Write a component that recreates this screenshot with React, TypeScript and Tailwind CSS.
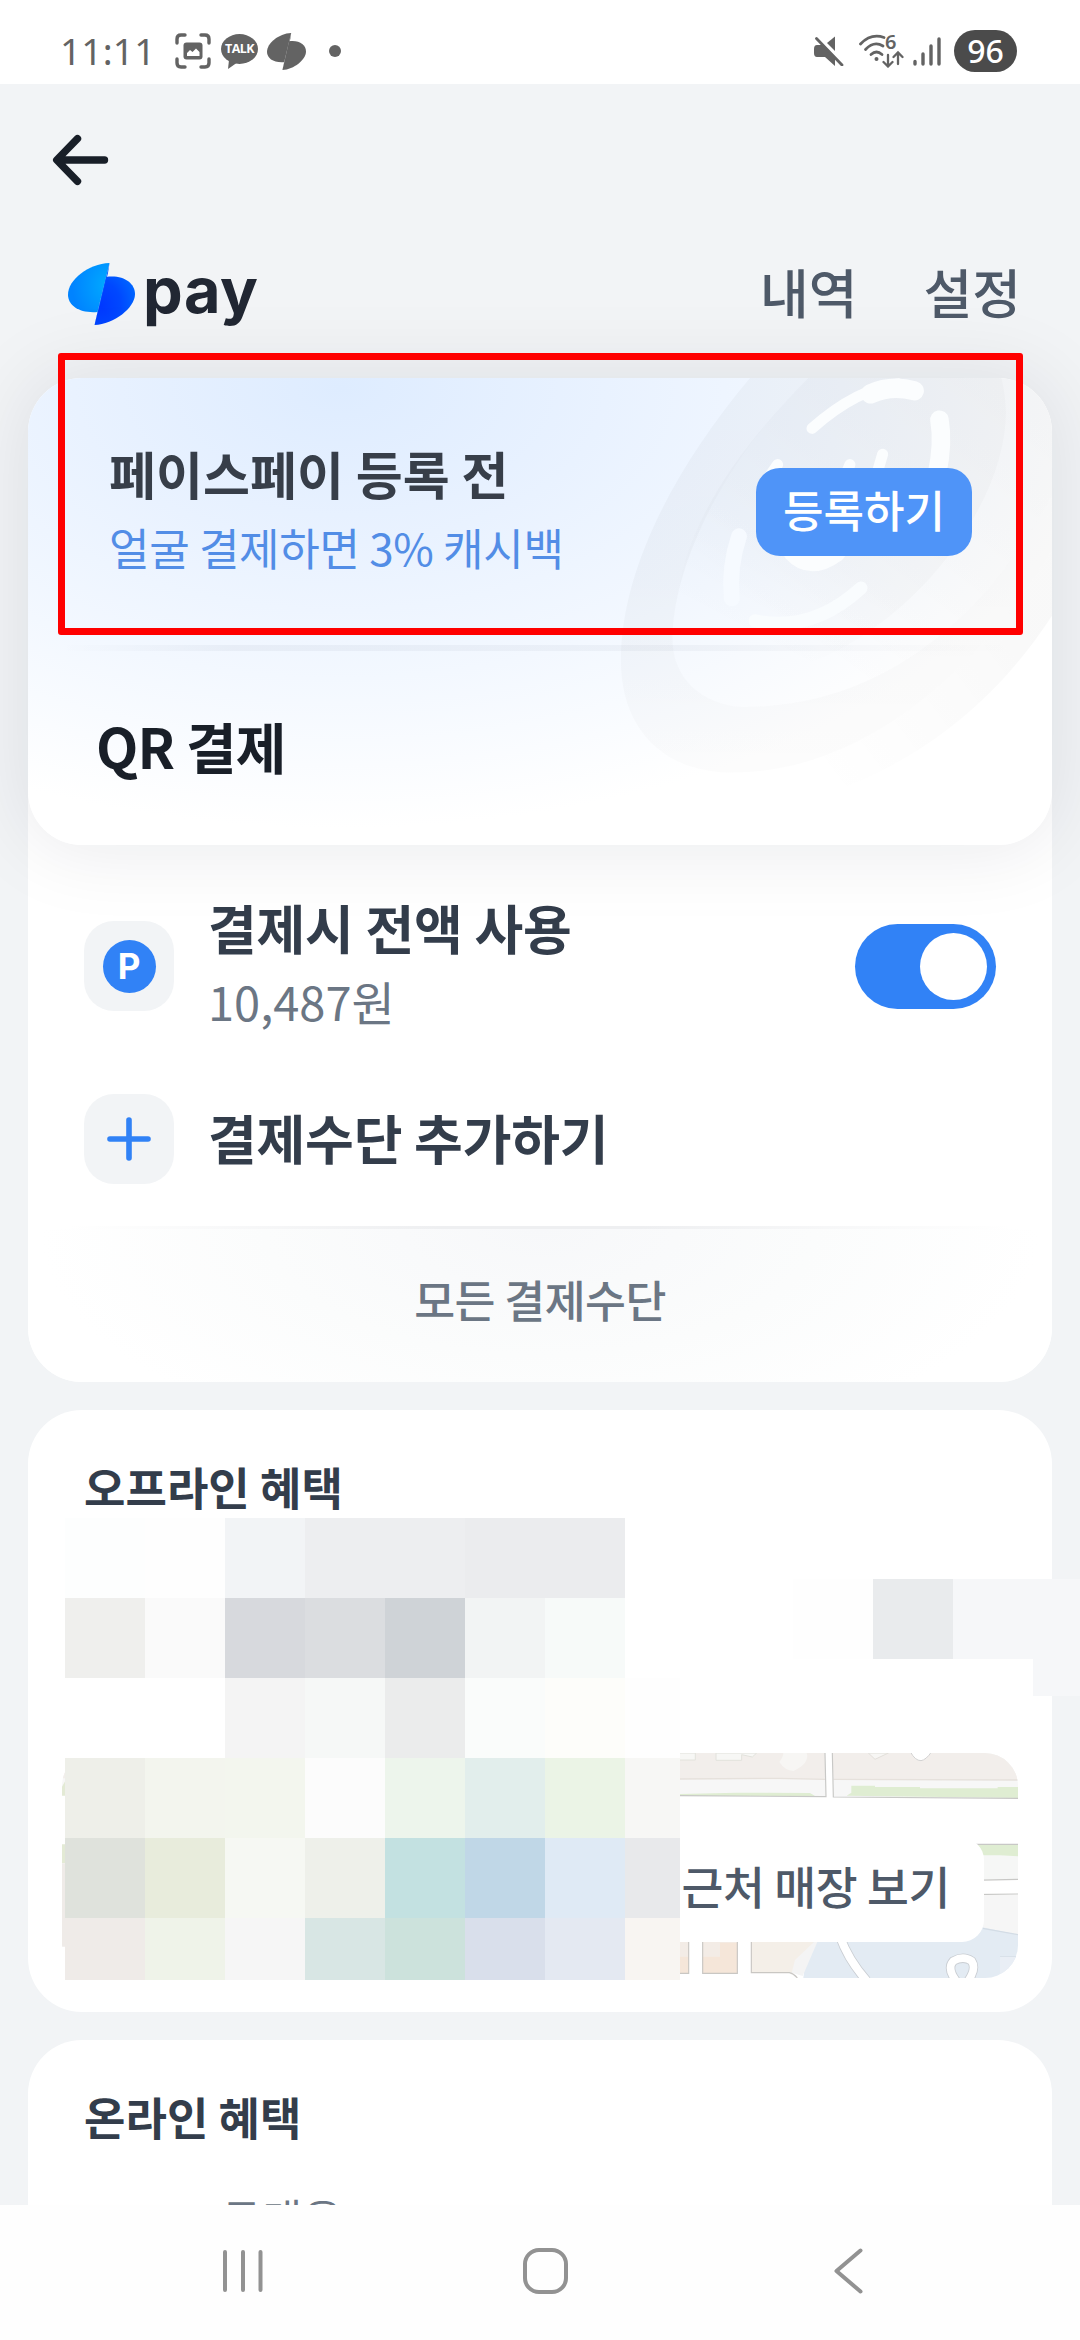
import type { ReactNode } from 'react';

const mosaicRows = [
  ['#fdfefe', '#fefefe', '#f2f4f6', '#edeef0', '#edeef0', '#ebecee', '#ebecee'],
  ['#efefed', '#fafafa', '#d7d9dd', '#dbdde0', '#cfd3d7', '#f2f4f4', '#f7faf9'],
  ['#ffffff', '#ffffff', '#f4f4f4', '#f6f8f7', '#ebecec', '#fafcfb', '#fdfdfa', '#fefefe'],
  ['#eeefe9', '#f3f5ee', '#f3f6ee', '#fcfcfc', '#edf5ec', '#e2eeec', '#ebf4e6', '#f7f7f5'],
  ['#dfe2dc', '#e8ecdc', '#f6f8f3', '#eef0ea', '#c3e1e1', '#c0d7e7', '#dfeaf5', '#e8e9eb'],
  ['#efebe8', '#eff3e9', '#f6f6f6', '#d8e6e4', '#cce2dc', '#d9dfeb', '#e4e9f2', '#f8f5f2'],
];

function TossMark({ className, mono = false }: { className: string; mono?: boolean }) {
  return (
    <svg className={className} viewBox="0 0 67 62" preserveAspectRatio="none">
      <defs>
        <radialGradient id="markLeft" cx="0.95" cy="0.45" r="0.85">
          <stop offset="0" stopColor="#00aaff" />
          <stop offset="1" stopColor="#0083ff" />
        </radialGradient>
        <radialGradient id="markRight" cx="0.15" cy="0.6" r="0.9">
          <stop offset="0" stopColor="#0038ff" />
          <stop offset="0.55" stopColor="#0048ff" />
          <stop offset="1" stopColor="#0066ff" />
        </radialGradient>
      </defs>
      <path
        d="M38 14 C55 11.5 67 20 67 31 C67 45 46 61 26.500 62 Z"
        fill={mono ? '#636363' : 'url(#markRight)'}
      />
      <path
        d="M41.500 0 C20 1 0 17 0 31.500 C0 43 12 50.500 29.500 49 Z"
        fill={mono ? '#636363' : 'url(#markLeft)'}
      />
      <path d="M41.500 0 L26.500 62 L31 45 L40 10 Z" fill={mono ? '#636363' : '#0058ff'} />
    </svg>
  );
}

function StatusBar() {
  return (
    <div className="flex h-[84px] shrink-0 items-center bg-white pl-[60px] pr-[63px] pt-[18px]">
      <span className="w-[115px] font-['Noto_Sans'] text-[37px] leading-[60px] font-normal tracking-[0.200px] text-[#636363]">
        11:11
      </span>
      <svg className="h-[36px] w-[36px]" viewBox="0 0 36 36" fill="none">
        <path
          d="M2 10 V6 Q2 2 6 2 H10 M26 2 H30 Q34 2 34 6 V10 M34 26 V30 Q34 34 30 34 H26 M10 34 H6 Q2 34 2 30 V26"
          stroke="#636363"
          strokeWidth="3.400"
          strokeLinecap="round"
        />
        <rect x="8.500" y="9.500" width="19" height="17" rx="3" fill="#636363" />
        <path d="M12 23 V20 L15 17 L17.500 19 L21 15.500 L24.500 19 V23 Z" fill="#fff" />
      </svg>
      <div className="relative ml-[10px] h-[36px] w-[37px]">
        <svg className="h-full w-full" viewBox="0 0 37 36">
          <ellipse cx="18.500" cy="16" rx="18.500" ry="15" fill="#636363" />
          <path d="M8 27 L7 36 L17 29 Z" fill="#636363" />
        </svg>
        <span className="absolute inset-x-0 top-[9px] text-center font-['Open_Sans'] text-[12.500px] leading-[14px] font-bold tracking-[-0.600px] text-white">
          TALK
        </span>
      </div>
      <TossMark mono className="ml-[9px] h-[37px] w-[39px]" />
      <div className="ml-[23px] h-[12px] w-[12px] rounded-full bg-[#636363]" />
      <svg className="ml-auto h-[30px] w-[30px]" viewBox="0 0 30 30">
        <path d="M0 13 Q0 9 3 9 H8 L21 22 V30 L11 21 H3 Q0 21 0 17 Z" fill="#636363" />
        <path d="M13 7 L21 0.500 V15 Z" fill="#636363" />
        <path d="M2.500 2.500 L28 29" stroke="#636363" strokeWidth="2.800" strokeLinecap="round" />
      </svg>
      <div className="relative ml-[15px] h-[34px] w-[45px]">
        <svg className="h-full w-full" viewBox="0 0 45 34" fill="none" stroke="#636363" strokeLinecap="round">
          <path d="M1.500 10 Q12 -1 25 3.500" strokeWidth="2.800" />
          <path d="M6.500 15.500 Q15 6.500 24 12" strokeWidth="2.800" />
          <path d="M12 20.500 Q17.500 15.500 23 20.500" strokeWidth="2.800" />
          <circle cx="17.500" cy="25" r="2" fill="#636363" stroke="none" />
          <path d="M29 21 V32 M24.500 28 L29 32.500 L33.500 28" strokeWidth="2.300" />
          <path d="M39 30 V19 M34.500 23 L39 18.500 L43.500 23" strokeWidth="2.300" />
        </svg>
        <span className="absolute left-[26px] top-[-2px] font-['Noto_Sans'] text-[20px] leading-[20px] font-semibold text-[#636363]">
          6
        </span>
      </div>
      <svg className="ml-[9px] h-[30px] w-[28px]" viewBox="0 0 28 30" stroke="#636363" strokeWidth="3.400" strokeLinecap="round">
        <path d="M2 25.500 V28 M10 18 V28 M18 10 V28 M26 3 V28" />
      </svg>
      <div className="ml-[13px] flex h-[42px] w-[63px] items-center justify-center rounded-full bg-[#4b4b4b] font-['Noto_Sans'] text-[32px] leading-[42px] font-medium text-white">
        96
      </div>
    </div>
  );
}

// Faint face coin in the top right corner of the pay card
function FaceCoin() {
  return (
    <svg className="absolute inset-0 h-full w-full" viewBox="-1487 141 2974 1354" preserveAspectRatio="none">
      <defs>
        <linearGradient id="coinRim" gradientUnits="userSpaceOnUse" x1="0" y1="141" x2="0" y2="1290">
          <stop offset="0" stopColor="#000" stopOpacity="0.026" />
          <stop offset="0.500" stopColor="#000" stopOpacity="0.028" />
          <stop offset="1" stopColor="#000" stopOpacity="0.012" />
        </linearGradient>
        <linearGradient id="coinTail" gradientUnits="userSpaceOnUse" x1="800" y1="1300" x2="1400" y2="850">
          <stop offset="0" stopColor="#000" stopOpacity="0" />
          <stop offset="1" stopColor="#000" stopOpacity="0.026" />
        </linearGradient>
        <linearGradient id="coinInner" gradientUnits="userSpaceOnUse" x1="1400" y1="200" x2="850" y2="960">
          <stop offset="0" stopColor="#000" stopOpacity="0.036" />
          <stop offset="0.500" stopColor="#000" stopOpacity="0.024" />
          <stop offset="1" stopColor="#000" stopOpacity="0.005" />
        </linearGradient>
        <linearGradient id="coinFace" gradientUnits="userSpaceOnUse" x1="1100" y1="200" x2="700" y2="960">
          <stop offset="0" stopColor="#000" stopOpacity="0.018" />
          <stop offset="0.600" stopColor="#000" stopOpacity="0.018" />
          <stop offset="1" stopColor="#000" stopOpacity="0" />
        </linearGradient>
      </defs>
      <path
        d="M610 141 C400 390 235 690 235 960 C235 1150 350 1285 560 1285 C900 1285 1240 1040 1487 640 V480 C1300 830 1000 1095 590 1095 C470 1090 385 1010 385 900 C385 680 540 370 780 141 Z"
        fill="url(#coinRim)"
      />
      <path d="M560 1285 C900 1285 1240 1040 1487 640 V830 C1310 1100 1080 1270 780 1365 Z" fill="url(#coinTail)" />
      <path
        d="M780 141 C540 370 385 680 385 900 C385 1010 470 1090 590 1095 C1000 1095 1300 830 1487 480 V141 Z"
        fill="url(#coinInner)"
      />
      <path
        d="M780 141 C560 360 400 600 395 830 C470 950 640 1000 800 960 C1100 840 1353 500 1353 240 Q1352 190 1340 141 Z"
        fill="url(#coinFace)"
      />
      <g fill="none" stroke="#fbfdfe" strokeLinecap="round">
        <path d="M790 287 Q920 172 1040 158" strokeWidth="32" />
        <path d="M960 187 Q1020 160 1087 178" strokeWidth="56" />
        <path d="M1160 262 Q1172 330 1153 420" strokeWidth="54" />
        <path d="M690 392 L650 450 M900 392 L880 440 M995 362 L978 420" strokeWidth="32" />
        <path d="M735 645 Q785 700 860 645" strokeWidth="58" />
        <path d="M578 600 Q548 690 557 780" strokeWidth="46" stroke="#f6faff" />
        <path d="M625 845 Q790 880 932 750" strokeWidth="38" stroke="#f9fcfe" />
      </g>
    </svg>
  );
}

function PayCard() {
  return (
    <section className="relative z-10 mx-7 h-[467px] shrink-0 rounded-[54px] bg-white shadow-[0_0_80px_6px_rgba(0,20,45,0.085)]">
      <div className="absolute inset-0 overflow-hidden rounded-[54px] bg-[radial-gradient(ellipse_760px_440px_at_312px_10px,#deecff_0%,#e9f2ff_35%,#f3f8ff_66%,#ffffff_100%)]">
        <FaceCoin />
      </div>
      <div className="relative flex h-[267px] items-center justify-between pl-[81px] pr-[80px]">
        <div className="-mt-1 flex flex-col">
          <span className="text-[51px] leading-[74px] font-semibold tracking-[0.100px] text-[#373e49]">페이스페이 등록 전</span>
          <span className="text-[44px] leading-[74px] font-normal tracking-[-0.300px] text-[#528de6]">얼굴 결제하면 3% 캐시백</span>
        </div>
        <button className="flex h-[88px] w-[216px] items-center justify-center rounded-[24px] bg-[#4f94f8] pb-[6px] text-[44px] font-medium text-white">
          등록하기
        </button>
      </div>
      <div className="relative h-[6px] bg-[linear-gradient(90deg,transparent_3%,rgba(0,20,60,0.045)_20%,rgba(0,20,60,0.035)_65%,transparent_97%)]" />
      <div className="relative flex h-[194px] items-center pb-[6px] pl-[68px]">
        <span className="text-[55px] font-semibold tracking-[-0.800px] text-[#191f28]">QR 결제</span>
      </div>
    </section>
  );
}

function MethodRow({ icon, title, sub, children }: { icon: ReactNode; title: string; sub?: string; children?: ReactNode }) {
  return (
    <div className="flex h-[172.500px] items-center pl-[56px] pr-[56px]">
      <div className="flex h-[90px] w-[90px] items-center justify-center rounded-[30px] bg-[#f2f4f6]">{icon}</div>
      <div className="-mt-1 ml-[34px] flex flex-1 flex-col">
        <span className="text-[53px] leading-[74px] font-semibold tracking-[-0.200px] text-[#333d4b]">{title}</span>
        {sub && <span className="text-[47px] leading-[74px] tracking-[0px] text-[#6b7684]">{sub}</span>}
      </div>
      {children}
    </div>
  );
}

function PaymentMethods() {
  return (
    <section className="mx-7 -mt-[100px] flex h-[637px] shrink-0 flex-col overflow-hidden rounded-b-[54px] bg-white pt-[135px]">
      <MethodRow
        icon={
          <div className="flex h-[53px] w-[53px] items-center justify-center rounded-full bg-[#3182f6] font-['Inter'] text-[35px] leading-[53px] font-bold text-white">
            P
          </div>
        }
        title="결제시 전액 사용"
        sub="10,487원"
      >
        <div className="flex h-[85px] w-[141px] items-center justify-end rounded-full bg-[#3182f6] pr-[9px]">
          <div className="h-[67px] w-[67px] rounded-full bg-white" />
        </div>
      </MethodRow>
      <MethodRow
        icon={
          <svg className="h-[44px] w-[44px]" viewBox="0 0 44 44" stroke="#3182f6" strokeWidth="5.600" strokeLinecap="round">
            <path d="M22 3 V41 M3 22 H41" />
          </svg>
        }
        title="결제수단 추가하기"
      />
      <div className="mt-px h-[3px] shrink-0 bg-[linear-gradient(90deg,transparent_4%,#eeeff1_40%,#eeeff1_60%,transparent_96%)]" />
      <div className="flex flex-1 items-center justify-center bg-[radial-gradient(ellipse_500px_230px_at_50%_0%,#f7f8fa_0%,#fbfcfc_55%,#ffffff_100%)] pb-[12px] text-[44.500px] font-medium tracking-[-0.600px] text-[#6b7684]">
        모든 결제수단
      </div>
    </section>
  );
}

function StoreMap() {
  return (
    <div className="relative mx-[34px] mt-[226px] h-[225px] overflow-hidden rounded-[33px] bg-white">
      <svg className="h-full w-full" viewBox="-1674 579 2868 675" preserveAspectRatio="none">
        <path d="M-1674 579 H615 L618 710 L-1674 690 Z" fill="#f7f7f7" />
        <path d="M-1674 579 H615 V658 H480 L-1674 655 Z" fill="#f2eeeb" />
        <path d="M637 579 H1194 V715 L640 711 Z" fill="#f7f7f7" />
        <path d="M637 579 H1194 V660 L640 657 Z" fill="#f2eeeb" />
        <path d="M180 657 L480 655 L615 658 M640 658 L1194 660" stroke="#e6e1dc" strokeWidth="4" fill="none" />
        <path d="M180 579 H226 V600 H180 M288 579 V601 H365 V584 L397 591 L410 579 Z" fill="#f7f7f5" stroke="#e2e2dc" strokeWidth="3" />
        <path d="M478 606 Q490 590 490 579 H560 Q570 610 520 633 Q495 632 478 606 Z" fill="#f7f6f4" />
        <path d="M745 579 L765 598 L805 579 Z" fill="#f7f6f4" stroke="#e2dfda" strokeWidth="3" />
        <path d="M871 575 Q885 602 903 602 Q918 600 935 575 Z" fill="#fff" stroke="#d2d2d2" strokeWidth="3" />
        <path d="M180 702 L350 698 L570 699 L585 708 L180 708 Z" fill="#dfedd2" />
        <path d="M680 707 L694 698 V677 H765 V681 L900 681 V685 H1133 V681 H1194 V714 Z" fill="#dfedd2" />
        <path d="M180 707 L618 710 L615 579 M637 579 L640 711 L1194 715" stroke="#c8c8c6" strokeWidth="3.500" fill="none" />
        <path d="M-1674 680 L-1640 620 V707 H-1674 Z M-1674 853 H-1600 V910 H-1674 Z" fill="#e3ead5" />
        <path d="M-1674 910 H-1600 V1160 H-1674 Z" fill="#efebe8" />
        <path d="M1050 853 H1194 V960 H1050 Z" fill="#f6f7f6" />
        <path d="M1070 853 H1194 V889 L1140 886 H1070 Z" fill="#dfedd2" />
        <path d="M1050 853 H1194 M1050 961 L1194 958 M1050 1004 L1194 1002" stroke="#c8c8c6" strokeWidth="3.500" />
        <path d="M1050 1005 H1194 V1125 L1050 1105 Z" fill="#f6f6f6" />
        <path d="M570 1100 H1080 L1194 1124 V1254 H550 Z" fill="#e3ebf3" />
        <path d="M1088 1105 L1194 1124 M1140 1190 H1194" stroke="#d3dce5" strokeWidth="4" />
        <path d="M1140 1190 H1194 V1254 H1140 Z" fill="#e9eef5" />
        <path d="M394 1130 H590 L530 1240 L510 1236 L394 1238 Z" fill="#f4efe8" />
        <path d="M582 1146 L525 1200 L515 1238 L548 1248 L592 1146 Z" fill="#f4f4f4" />
        <path d="M180 1130 H206 V1240 H180 Z M248 1130 H352 V1240 H248 Z" fill="#f3ece6" />
        <path d="M180 1190 H206 V1240 H180 Z M248 1190 H300 V1148 H352 V1240 H248 Z" fill="#f5e6d9" />
        <path d="M180 1240 H206 V1130 M248 1130 V1240 H352 V1130 M394 1130 V1238 H508 Q520 1240 532 1254" stroke="#c9c7c3" strokeWidth="3.500" fill="none" />
        <path d="M660 1130 Q685 1200 740 1262" stroke="#c9cdd2" strokeWidth="29" fill="none" />
        <path d="M660 1130 Q685 1200 740 1262" stroke="#fff" strokeWidth="24" fill="none" />
        <path d="M1008 1262 Q980 1225 1000 1203 Q1030 1186 1055 1203 Q1070 1225 1045 1262" stroke="#c9cdd2" strokeWidth="28" fill="none" />
        <path d="M1008 1262 Q980 1225 1000 1203 Q1030 1186 1055 1203 Q1070 1225 1045 1262" stroke="#fff" strokeWidth="23" fill="none" />
      </svg>
      <button className="absolute bottom-[36px] right-[34px] flex h-[104px] w-[880px] items-center justify-end rounded-[22px] bg-white pb-[11px] pr-[34px] text-[45.500px] leading-[60px] font-medium tracking-[-0.400px] text-[#4e5968]">
        근처 매장 보기
      </button>
    </div>
  );
}

function Mosaic() {
  return (
    <>
      <div className="absolute left-[65px] top-[1434px] flex h-[462px] flex-col overflow-hidden">
        {mosaicRows.map((row, y) => (
          <div key={y} className="flex h-[80px] shrink-0">
            {row.map((color, x) => (
              <div key={x} className={x === 7 ? 'w-[55px]' : 'w-[80px]'} style={{ backgroundColor: color }} />
            ))}
          </div>
        ))}
      </div>
      <div className="absolute right-0 top-[1495px] flex items-start">
        <div className="h-[80px] w-[80px] bg-[#fefefe]" />
        <div className="h-[80px] w-[80px] bg-[#e9ebed]" />
        <div className="h-[80px] w-[80px] bg-[#f6f7f9]" />
        <div className="h-[117px] w-[47px] bg-[#f6f7f9]" />
      </div>
    </>
  );
}

function NavBar() {
  return (
    <nav className="flex h-[135px] shrink-0 items-center bg-[#fefefe] pb-[3px] pl-[223px]">
      <svg className="h-[44px] w-[40px]" viewBox="0 0 40 44" stroke="#929292" strokeWidth="4" strokeLinecap="round">
        <path d="M2 3 V41 M20 3 V41 M37.500 3 V41" />
      </svg>
      <div className="ml-[260px] h-[46px] w-[45px] rounded-[16px] border-4 border-[#929292]" />
      <svg className="ml-[266px] h-[46px] w-[29px]" viewBox="0 0 29 46" fill="none" stroke="#929292" strokeWidth="4" strokeLinecap="round" strokeLinejoin="round">
        <path d="M26.500 2.500 L2.500 23 L26.500 43.500" />
      </svg>
    </nav>
  );
}

export default function App() {
  return (
    <div className="relative flex h-[2340px] w-[1080px] flex-col overflow-hidden bg-white font-['Noto_Sans_CJK_KR',sans-serif]">
      <StatusBar />
      <main className="relative flex h-[2121px] shrink-0 flex-col overflow-hidden bg-[#f2f4f6]">
        <div className="flex h-[152px] shrink-0 items-center pl-[52px]">
          <svg className="h-[52px] w-[57px]" viewBox="0 0 57 52" fill="none" stroke="#191f28" strokeWidth="7.400" strokeLinecap="round" strokeLinejoin="round">
            <path d="M25.500 4.700 L4.700 26 L25.500 47.300 M5 26 H52.500" />
          </svg>
        </div>
        <header className="mb-[26px] flex h-[116px] shrink-0 items-center pl-[68px] pr-[59px]">
          <TossMark className="h-[62px] w-[67px]" />
          <span className="-mt-[8px] ml-[8px] font-['Inter'] text-[63px] leading-[70px] font-bold tracking-[0.600px] text-[#212733]">
            pay
          </span>
          <div className="ml-auto flex gap-[66px] pb-[6px] text-[53px] leading-[70px] font-medium text-[#4e5968]">
            <span>내역</span>
            <span>설정</span>
          </div>
        </header>

        <PayCard />
        <PaymentMethods />

        <section className="mx-7 mt-7 h-[602px] shrink-0 overflow-hidden rounded-[54px] bg-white pt-[37px]">
          <h2 className="pl-[56px] text-[45px] leading-[80px] font-semibold tracking-[0.050px] text-[#333d4b]">오프라인 혜택</h2>
          <StoreMap />
        </section>

        <section className="mx-7 mt-7 h-[400px] shrink-0 rounded-t-[54px] bg-white pt-[37px]">
          <h2 className="pl-[56px] text-[45px] leading-[80px] font-semibold tracking-[0.050px] text-[#333d4b]">온라인 혜택</h2>
          <p className="mt-[30px] pl-[194px] text-[43px] leading-[60px] tracking-[1px] text-[#6b7684]">구매용</p>
        </section>

        <Mosaic />
      </main>
      <NavBar />
      <div className="absolute left-[58px] top-[353px] z-20 h-[282px] w-[965px] rounded-[3px] border-[7px] border-[#ff0000]" />
    </div>
  );
}
